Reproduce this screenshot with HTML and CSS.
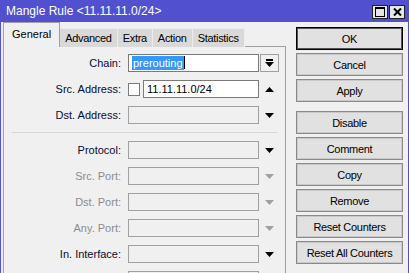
FILE: index.html
```html
<!DOCTYPE html>
<html lang="en">
<head>
  <meta charset="UTF-8">
  <title>Mangle Rule</title>
  <link rel="stylesheet" href="styles.css">
</head>
<body>
  <div class="window">
    <!-- Title bar -->
    <div class="titlebar">
      <span class="title">Mangle Rule &lt;11.11.11.0/24&gt;</span>
      <div class="win-btns">
        <span class="wbtn">
          <svg width="10" height="10" viewBox="0 0 10 10"><rect x="0.5" y="0.5" width="9" height="9" fill="none" stroke="#000"/><rect x="0" y="0" width="10" height="2" fill="#000"/></svg>
        </span>
        <span class="wbtn">
          <svg width="9" height="8" viewBox="0 0 9 8"><path d="M1 0.5L8 7.5M8 0.5L1 7.5" stroke="#000" stroke-width="2"/></svg>
        </span>
      </div>
    </div>

    <div class="content">
      <!-- Left side: tabs + form -->
      <div class="tabs-area">
        <div class="tab-strip">
          <div class="tab active">General</div>
          <div class="tab">Advanced</div>
          <div class="tab">Extra</div>
          <div class="tab">Action</div>
          <div class="tab">Statistics</div>
        </div>

        <div class="panel">
          <div class="row">
            <label class="label">Chain:</label>
            <div class="field white focus"><span class="selected">prerouting</span><span class="caret"></span></div>
            <div class="drop-btn">
              <svg width="9" height="8" viewBox="0 0 9 8"><rect x="1" y="0" width="7" height="2" fill="#000"/><polygon points="0,3 9,3 4.5,8" fill="#000"/></svg>
            </div>
          </div>
          <div class="row">
            <label class="label">Src. Address:</label>
            <span class="check"></span>
            <div class="field white short">11.11.11.0/24</div>
            <div class="arrow">
              <svg width="9" height="5" viewBox="0 0 9 5"><polygon points="0,5 9,5 4.5,0" fill="#000"/></svg>
            </div>
          </div>
          <div class="row">
            <label class="label">Dst. Address:</label>
            <div class="field"></div>
            <div class="arrow">
              <svg width="9" height="5" viewBox="0 0 9 5"><polygon points="0,0 9,0 4.5,5" fill="#000"/></svg>
            </div>
          </div>

          <div class="separator"></div>

          <div class="row">
            <label class="label">Protocol:</label>
            <div class="field"></div>
            <div class="arrow">
              <svg width="9" height="5" viewBox="0 0 9 5"><polygon points="0,0 9,0 4.5,5" fill="#000"/></svg>
            </div>
          </div>
          <div class="row disabled">
            <label class="label">Src. Port:</label>
            <div class="field"></div>
            <div class="arrow">
              <svg width="9" height="5" viewBox="0 0 9 5"><polygon points="0,0 9,0 4.5,5" fill="#a0a0a0"/></svg>
            </div>
          </div>
          <div class="row disabled">
            <label class="label">Dst. Port:</label>
            <div class="field"></div>
            <div class="arrow">
              <svg width="9" height="5" viewBox="0 0 9 5"><polygon points="0,0 9,0 4.5,5" fill="#a0a0a0"/></svg>
            </div>
          </div>
          <div class="row disabled">
            <label class="label">Any. Port:</label>
            <div class="field"></div>
            <div class="arrow">
              <svg width="9" height="5" viewBox="0 0 9 5"><polygon points="0,0 9,0 4.5,5" fill="#a0a0a0"/></svg>
            </div>
          </div>
          <div class="row">
            <label class="label">In. Interface:</label>
            <div class="field"></div>
            <div class="arrow">
              <svg width="9" height="5" viewBox="0 0 9 5"><polygon points="0,0 9,0 4.5,5" fill="#000"/></svg>
            </div>
          </div>
          <div class="row">
            <span class="label"></span>
            <div class="field"></div>
            <div class="arrow"></div>
          </div>
        </div>
      </div>

      <!-- Right side: action buttons -->
      <div class="actions">
        <button class="btn default">OK</button>
        <button class="btn">Cancel</button>
        <button class="btn">Apply</button>
        <button class="btn spaced">Disable</button>
        <button class="btn">Comment</button>
        <button class="btn">Copy</button>
        <button class="btn">Remove</button>
        <button class="btn">Reset Counters</button>
        <button class="btn">Reset All Counters</button>
      </div>
    </div>
  </div>
</body>
</html>
```

FILE: styles.css
```css
body {
  margin: 0;
  font-family: "Liberation Sans", Arial, sans-serif;
  font-size: 11px;
  color: #000;
  background-color: #f0f0f0;
  overflow: hidden;
}

.window {
  height: 273px;
  border-left: 1px solid #5151cf;
  border-right: 1px solid #5151cf;
  background-color: #f0f0f0;
}

/* Title bar */
.titlebar {
  display: flex;
  align-items: flex-start;
  height: 22px;
  background-color: #5151cf;
  color: #fff;
}

.title {
  font-size: 12px;
  line-height: 22px;
  padding-left: 5px;
}

.win-btns {
  display: flex;
  gap: 1px;
  margin-left: auto;
  margin-top: 5px;
  padding-right: 3px;
}

.wbtn {
  display: flex;
  align-items: center;
  justify-content: center;
  width: 14px;
  height: 12px;
  background-color: #e6e6e6;
  border: 1px solid #222;
}

/* Main content */
.content {
  display: flex;
  padding-top: 1px;
}

.tabs-area {
  width: 283px;
  margin-left: 2px;
}

.tab-strip {
  display: flex;
  align-items: flex-end;
  height: 24px;
  margin-bottom: -1px;
}

.tab {
  height: 18px;
  line-height: 18px;
  padding: 0 5px;
  letter-spacing: -0.3px;
  background-color: #d9d9d9;
  border: 1px solid #ececec;
  border-bottom: none;
  border-left: none;
}

.tab.active {
  position: relative;
  z-index: 1;
  height: 24px;
  line-height: 22px;
  padding: 0 8px;
  letter-spacing: 0;
  background-color: #f0f0f0;
  border: 1px solid #a0a0a0;
  border-bottom: none;
}

/* Tab panel with form rows */
.panel {
  height: 260px;
  padding-top: 7px;
  border: 1px solid #a0a0a0;
  border-bottom: none;
  background-color: #f0f0f0;
}

.row {
  display: flex;
  align-items: center;
  height: 18px;
  margin-bottom: 8px;
  color: #0b0b30;
}

.label {
  width: 117px;
  margin-right: 7px;
  text-align: right;
}

.row.disabled .label {
  color: #8c8c8c;
}

.field {
  box-sizing: border-box;
  width: 131px;
  height: 18px;
  line-height: 16px;
  padding-left: 3px;
  border: 1px solid #a0a0a0;
  background-color: #f0f0f0;
  font-size: 11px;
  color: #000;
}

.field.white {
  background-color: #fff;
  border-color: #7a7a7a;
}

.field.short {
  width: 116px;
  margin-left: 3px;
}

.selected {
  background-color: #3399ff;
  color: #fff;
  padding: 1px 1px;
}

.caret {
  display: inline-block;
  width: 1px;
  height: 13px;
  vertical-align: -2px;
  background-color: #000;
}

.check {
  box-sizing: border-box;
  width: 12px;
  height: 13px;
  border: 1px solid #7a7a7a;
  background-color: #fff;
}

.drop-btn {
  box-sizing: border-box;
  display: flex;
  align-items: center;
  justify-content: center;
  width: 19px;
  height: 18px;
  margin-left: 1px;
  border: 1px solid #a0a0a0;
  background-color: #f0f0f0;
}

.arrow {
  display: flex;
  align-items: center;
  justify-content: center;
  width: 19px;
  height: 18px;
  margin-left: 1px;
}

.separator {
  height: 1px;
  margin: 1px 8px 8px 8px;
  background-color: #d7d7d7;
}

/* Action buttons */
.actions {
  display: flex;
  flex-direction: column;
  gap: 3px;
  width: 107px;
  margin-left: 10px;
  padding-top: 4px;
}

.btn {
  box-sizing: border-box;
  height: 23px;
  padding: 0;
  font-family: "Liberation Sans", Arial, sans-serif;
  font-size: 11px;
  letter-spacing: -0.3px;
  color: #000;
  background-color: #e1e1e1;
  border: 1px solid #8a8a8a;
  box-shadow: inset 0 0 0 1px #c9c9c9;
}

.btn.default {
  border-color: #000;
  box-shadow: inset 0 0 0 1px #555;
}

.btn.spaced {
  margin-top: 6px;
}
```
